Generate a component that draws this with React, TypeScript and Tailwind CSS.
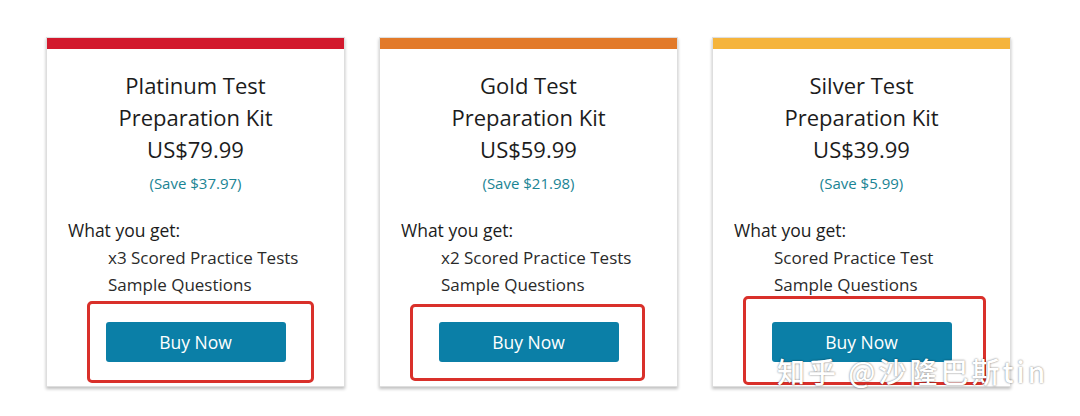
type Kit = {
  name: string;
  price: string;
  save: string;
  bar: string;
  items: string[];
  mark: string;
};

const kits: Kit[] = [
  {
    name: "Platinum Test",
    price: "US$79.99",
    save: "(Save $37.97)",
    bar: "bg-[#d2192d]",
    items: ["x3 Scored Practice Tests", "Sample Questions"],
    mark: "left-[40px] top-[263px] w-[227px] h-[82px]",
  },
  {
    name: "Gold Test",
    price: "US$59.99",
    save: "(Save $21.98)",
    bar: "bg-[#e27a2a]",
    items: ["x2 Scored Practice Tests", "Sample Questions"],
    mark: "left-[30px] top-[266px] w-[235px] h-[77px]",
  },
  {
    name: "Silver Test",
    price: "US$39.99",
    save: "(Save $5.99)",
    bar: "bg-[#f5b43c]",
    items: ["Scored Practice Test", "Sample Questions"],
    mark: "left-[30px] top-[258px] w-[243px] h-[89px]",
  },
];

function KitCard({ kit }: { kit: Kit }) {
  return (
    <div className="relative w-[299px] h-[350px] bg-white border border-[#dedede] shadow-[0_2px_3px_rgba(0,0,0,0.25)] flex flex-col">
      <div className={`h-[11px] ${kit.bar}`} />
      <div className="pt-[20px] text-center text-[22px] leading-[32px] text-[#1c1c1c]">
        <div>{kit.name}</div>
        <div>Preparation Kit</div>
        <div>{kit.price}</div>
      </div>
      <div className="mt-[8px] text-center text-[15px] leading-[20px] text-[#1a8494]">{kit.save}</div>
      <div className="mt-[24px] pl-[21px] text-[17.5px] leading-[27px] text-[#1c1c1c]">What you get:</div>
      <ul className="pl-[61px] text-[17px] leading-[27px] text-[#2a2a2a]">
        {kit.items.map((item) => (
          <li key={item}>{item}</li>
        ))}
      </ul>
      <button
        type="button"
        className="mt-[24px] mx-auto w-[180px] h-[40px] rounded-[3px] bg-[#0b7fa7] text-white text-[17.5px]"
      >
        Buy Now
      </button>
      <div className={`absolute ${kit.mark} border-[3.5px] border-[#d9302a] rounded-[5px] pointer-events-none`} />
    </div>
  );
}

export default function App() {
  return (
    <div
      className="relative w-[1080px] h-[416px] bg-white overflow-hidden"
      style={{ fontFamily: '"Open Sans", "Noto Sans", sans-serif' }}
    >
      <div className="flex gap-[34px] pl-[46px] pt-[37px]">
        {kits.map((kit) => (
          <KitCard key={kit.name} kit={kit} />
        ))}
      </div>
      <div
        className="absolute left-[777px] top-[354px] text-[28px] leading-[34px] font-medium text-white tracking-[3px] [text-shadow:0_0_2px_rgba(0,0,0,0.6)]"
        style={{ fontFamily: '"Noto Sans CJK SC", "Open Sans", sans-serif' }}
      >
        知乎 @沙隆巴斯tin
      </div>
    </div>
  );
}
